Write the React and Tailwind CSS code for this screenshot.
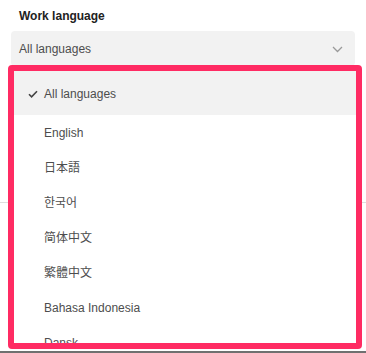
import React from "react";

const langs = ["English", "日本語", "한국어", "简体中文", "繁體中文", "Bahasa Indonesia", "Dansk"];

export default function App() {
  return (
    <div
      className="relative w-[366px] h-[353px] bg-white overflow-hidden"
      style={{ fontFamily: '"Liberation Sans", Arial, "Noto Sans CJK JP", "Noto Sans CJK KR", "Noto Sans CJK SC", sans-serif' }}
    >
      <div className="pt-[8px] px-[11px]">
        <div className="pl-[8px] text-[12px] leading-[16px] font-bold text-[#222]">Work language</div>
        <div className="mt-[7px] h-[35px] rounded-[4px] bg-[#f2f2f2] flex items-center justify-between pl-[8px] pr-[12px] pt-[1px]">
          <span className="text-[12px] text-[#4d4d4d]">All languages</span>
          <svg width="11" height="7" viewBox="0 0 11 7" fill="none">
            <path d="M1 1l4.5 4.5L10 1" stroke="#9a9a9a" strokeWidth="1.3" />
          </svg>
        </div>
      </div>

      <div className="absolute left-0 right-0 top-[202px] h-px bg-[#dedede]" />
      <div className="absolute left-0 right-0 top-[351px] h-[2px] bg-[#707070]" />

      <div className="absolute left-[8px] top-[65px] w-[354px] h-[284px] border-[6px] border-[#ff2b63] rounded-[4px] bg-white overflow-hidden">
        <div className="h-[44px] bg-[#f2f2f2] flex items-center pl-[14px] pt-[1px] text-[12px] text-[#4d4d4d]">
          <svg width="10" height="8" viewBox="0 0 10 8" className="mr-[6px]">
            <path d="M1 4.2l2.6 2.6L9 1.2" stroke="#444" strokeWidth="1.6" fill="none" />
          </svg>
          <span>All languages</span>
        </div>
        {langs.map((l) => (
          <div key={l} className="h-[35px] flex items-center pl-[30px] pt-[1px] text-[12px] text-[#4d4d4d]">
            {l}
          </div>
        ))}
      </div>
    </div>
  );
}
